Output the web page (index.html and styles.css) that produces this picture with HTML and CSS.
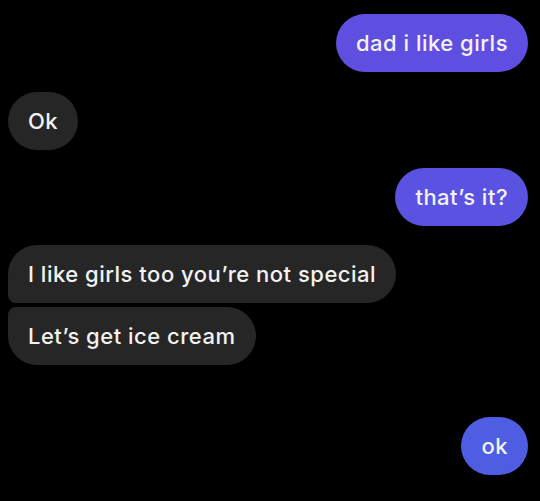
FILE: index.html
```html
<!DOCTYPE html>
<html>
<head>
<meta charset="utf-8">
<link rel="stylesheet" href="styles.css">
</head>
<body>
<div class="chat">
  <div class="msg out m1">dad i like girls</div>
  <div class="msg in m2">Ok</div>
  <div class="msg out m3">that’s it?</div>
  <div class="msg in m4 first">I like girls too you’re not special</div>
  <div class="msg in m5 last">Let’s get ice cream</div>
  <div class="msg out m6">ok</div>
</div>
</body>
</html>
```
FILE: styles.css
```css
html, body {
  margin: 0;
  padding: 0;
  background: #000;
}
.chat {
  width: 540px;
  height: 501px;
  box-sizing: border-box;
  padding: 14px 12px 0 8px;
  display: flex;
  flex-direction: column;
  align-items: flex-start;
  font-family: Inter, "Liberation Sans", sans-serif;
}
.msg {
  height: 58px;
  line-height: 58px;
  padding: 0 20px;
  border-radius: 29px;
  font-size: 22px;
  font-weight: 500;
  letter-spacing: 0.5px;
  color: #f2f2f2;
  white-space: nowrap;
  box-sizing: border-box;
}
.out {
  align-self: flex-end;
}
.in {
  background: #262626;
}
.m1 { background: #5f4fe0; }
.m2 { margin-top: 20px; }
.m3 { margin-top: 18px; background: #5a52e1; }
.m4 { margin-top: 19px; }
.m5 { margin-top: 4px; }
.m6 { margin-top: 52px; background: #4f5de2; }
.first { border-bottom-left-radius: 8px; }
.last { border-top-left-radius: 8px; }
```
